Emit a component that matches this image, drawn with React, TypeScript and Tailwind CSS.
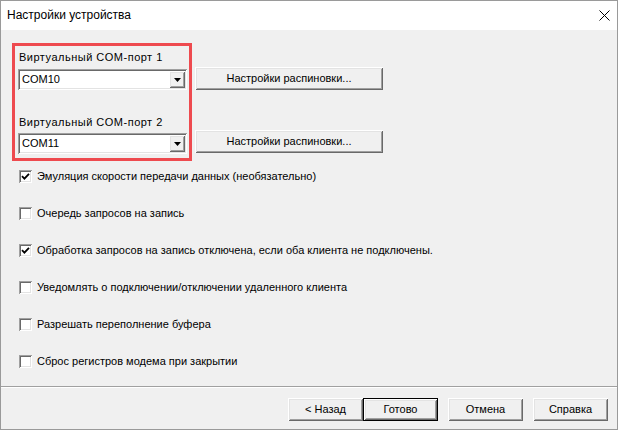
import React from "react";

// Classic Win32 bevels, as box-shadow stacks
const raised =
  "shadow-[inset_1px_1px_#ffffff,inset_-1px_-1px_#696969,inset_2px_2px_#e3e3e3,inset_-2px_-2px_#a0a0a0]";
const sunken =
  "shadow-[inset_1px_1px_#a0a0a0,inset_-1px_-1px_#ffffff,inset_2px_2px_#696969,inset_-2px_-2px_#e3e3e3]";

function ComboBox({ value }: { value: string }) {
  return (
    <div className={`w-[169px] h-[21px] bg-white flex items-center p-[2px] ${sunken}`}>
      <span className="flex-1 pl-[2px] text-black">{value}</span>
      <div className={`w-[16px] h-[17px] bg-[#f0f0f0] flex items-center justify-center ${raised}`}>
        <svg width="7" height="4" viewBox="0 0 7 4">
          <path d="M0 0h7L3.5 4z" fill="#000" />
        </svg>
      </div>
    </div>
  );
}

function PushButton({
  children,
  className = "",
  isDefault = false,
}: {
  children: React.ReactNode;
  className?: string;
  isDefault?: boolean;
}) {
  const face = (
    <div className={`w-full h-full bg-[#f0f0f0] flex items-center justify-center ${raised}`}>
      {children}
    </div>
  );
  if (isDefault) {
    return <div className={`h-[23px] border border-black ${className}`}>{face}</div>;
  }
  return <div className={`h-[23px] ${className}`}>{face}</div>;
}

function CheckBox({ label, checked = false }: { label: string; checked?: boolean }) {
  return (
    <div className="flex items-center h-[13px] gap-[5px]">
      <div className={`w-[13px] h-[13px] bg-white flex items-center justify-center ${sunken}`}>
        {checked && (
          <svg width="9" height="9" viewBox="0 0 9 9">
            <path d="M1 4.2l2.4 2.4L8 1.8" fill="none" stroke="#000" strokeWidth="1.8" />
          </svg>
        )}
      </div>
      <span>{label}</span>
    </div>
  );
}

const options = [
  { label: "Эмуляция скорости передачи данных (необязательно)", checked: true },
  { label: "Очередь запросов на запись", checked: false },
  { label: "Обработка запросов на запись отключена, если оба клиента не подключены.", checked: true },
  { label: "Уведомлять о подключении/отключении удаленного клиента", checked: false },
  { label: "Разрешать переполнение буфера", checked: false },
  { label: "Сброс регистров модема при закрытии", checked: false },
];

export default function App() {
  return (
    <div
      className="w-[618px] h-[430px] flex flex-col border border-[#9a9a9a] bg-[#f0f0f0] text-[11px] leading-[13px] text-black"
      style={{ fontFamily: '"Liberation Sans", Arial, sans-serif' }}
    >
      {/* title bar */}
      <div className="h-[29px] bg-white flex items-center justify-between pl-[6px] pr-[7px]">
        <span className="text-[12px] text-black">Настройки устройства</span>
        <svg width="11" height="11" viewBox="0 0 11 11">
          <path d="M0.5 0.5l10 10M10.5 0.5l-10 10" stroke="#000" strokeWidth="1" />
        </svg>
      </div>

      {/* page */}
      <div className="flex-1 flex flex-col pl-[11px] pt-[13px]">
        <div className="flex items-start">
          <div className="w-[180px] h-[118px] border-[3px] border-[#ee4a4f] pl-[3px] pt-[5px] flex flex-col">
            <span className="pl-[1px] tracking-[0.5px]">Виртуальный COM-порт 1</span>
            <div className="mt-[5px]">
              <ComboBox value="COM10" />
            </div>
            <span className="pl-[1px] mt-[26px] tracking-[0.5px]">Виртуальный COM-порт 2</span>
            <div className="mt-[4px]">
              <ComboBox value="COM11" />
            </div>
          </div>
          <div className="ml-[3px] pt-[24px] flex flex-col gap-[40px]">
            <PushButton className="w-[188px]">Настройки распиновки...</PushButton>
            <PushButton className="w-[188px]">Настройки распиновки...</PushButton>
          </div>
        </div>

        <div className="mt-[9px] ml-[7px] flex flex-col gap-[24px]">
          {options.map((o) => (
            <CheckBox key={o.label} label={o.label} checked={o.checked} />
          ))}
        </div>
      </div>

      {/* footer */}
      <div className="h-[2px] border-t border-[#a0a0a0] border-b border-b-white" />
      <div className="flex justify-end pt-[10px] pb-[8px] pr-[9px]">
        <PushButton className="w-[75px]">&lt; Назад</PushButton>
        <PushButton className="w-[75px]" isDefault>
          Готово
        </PushButton>
        <PushButton className="w-[75px] ml-[10px]">Отмена</PushButton>
        <PushButton className="w-[75px] ml-[10px]">Справка</PushButton>
      </div>
    </div>
  );
}
